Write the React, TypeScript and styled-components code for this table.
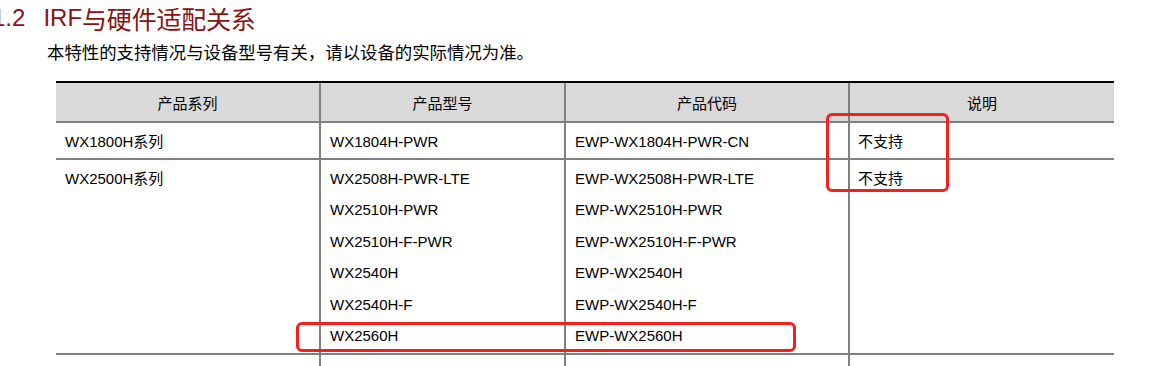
import React from "react";
import styled, { createGlobalStyle } from "styled-components";

const GlobalStyle = createGlobalStyle`
  html, body {
    margin: 0;
    padding: 0;
    background: #ffffff;
  }
  body {
    width: 1155px;
    height: 366px;
    overflow: hidden;
    font-family: "Liberation Sans", "Noto Sans CJK SC", sans-serif;
    color: #000;
  }
`;

const Page = styled.div`
  position: relative;
  width: 1155px;
  height: 366px;
  overflow: hidden;
`;

const Heading = styled.h2`
  margin: 0 0 0 -8px;
  height: 36px;
  display: flex;
  align-items: center;
  font-family: "Liberation Sans", "Noto Sans CJK SC", sans-serif;
  font-weight: normal;
  font-size: 24px;
  color: #8a1212;
  white-space: nowrap;
`;

const HeadingNumber = styled.span`
  margin-right: 18px;
`;

const HeadingCjk = styled.span`
  font-size: 25px;
  letter-spacing: -0.2px;
`;

const Intro = styled.p`
  margin: 4px 0 0 47px;
  height: 26px;
  line-height: 26px;
  font-size: 17.4px;
  font-family: "Liberation Sans", "Noto Sans CJK SC", sans-serif;
  white-space: nowrap;
`;

const Grid = styled.div`
  margin: 15px 0 0 56px;
  width: 1058px;
  display: grid;
  grid-template-columns: 263px 245px 284px 266px;
  border-top: 2px solid #000;
`;

const HeadCell = styled.div<{ $first?: boolean }>`
  box-sizing: border-box;
  height: 40px;
  background: #d9d9d9;
  border-bottom: 2px solid #808080;
  border-left: ${(p) => (p.$first ? "none" : "2px solid #808080")};
  display: flex;
  align-items: center;
  justify-content: center;
  font-size: 15px;
`;

const Cell = styled.div<{ $first?: boolean; $pad?: number }>`
  box-sizing: border-box;
  border-bottom: 2px solid #808080;
  border-left: ${(p) => (p.$first ? "none" : "2px solid #808080")};
  padding: 2.6px 9px 1.4px ${(p) => p.$pad ?? 9}px;
  font-size: 15px;
  white-space: nowrap;
`;

const FillerCell = styled.div<{ $first?: boolean }>`
  height: 30px;
  border-left: ${(p) => (p.$first ? "none" : "2px solid #808080")};
`;

const Line = styled.div`
  line-height: 31.4px;
  height: 31.4px;
`;

const Mark = styled.div`
  position: absolute;
  box-sizing: border-box;
  border: 3px solid #f42020;
  border-radius: 6px;
  pointer-events: none;
`;

const headers = ["产品系列", "产品型号", "产品代码", "说明"];

type Row = { series: string; models: string[]; codes: string[]; note: string };

const rows: Row[] = [
  {
    series: "WX1800H系列",
    models: ["WX1804H-PWR"],
    codes: ["EWP-WX1804H-PWR-CN"],
    note: "不支持",
  },
  {
    series: "WX2500H系列",
    models: [
      "WX2508H-PWR-LTE",
      "WX2510H-PWR",
      "WX2510H-F-PWR",
      "WX2540H",
      "WX2540H-F",
      "WX2560H",
    ],
    codes: [
      "EWP-WX2508H-PWR-LTE",
      "EWP-WX2510H-PWR",
      "EWP-WX2510H-F-PWR",
      "EWP-WX2540H",
      "EWP-WX2540H-F",
      "EWP-WX2560H",
    ],
    note: "不支持",
  },
];

export default function App() {
  return (
    <Page>
      <GlobalStyle />
      <Heading>
        <HeadingNumber>1.2</HeadingNumber>
        IRF<HeadingCjk>与硬件适配关系</HeadingCjk>
      </Heading>
      <Intro>本特性的支持情况与设备型号有关，请以设备的实际情况为准。</Intro>
      <Grid>
        {headers.map((h, i) => (
          <HeadCell key={h} $first={i === 0}>
            {h}
          </HeadCell>
        ))}
        {rows.map((r) => (
          <React.Fragment key={r.series}>
            <Cell $first>
              <Line>{r.series}</Line>
            </Cell>
            <Cell>
              {r.models.map((m) => (
                <Line key={m}>{m}</Line>
              ))}
            </Cell>
            <Cell>
              {r.codes.map((c) => (
                <Line key={c}>{c}</Line>
              ))}
            </Cell>
            <Cell $pad={8}>
              <Line>{r.note}</Line>
            </Cell>
          </React.Fragment>
        ))}
        {headers.map((h, i) => (
          <FillerCell key={"f" + h} $first={i === 0} />
        ))}
      </Grid>
      <Mark style={{ left: 826, top: 113, width: 123, height: 79 }} />
      <Mark style={{ left: 296, top: 322, width: 500, height: 30 }} />
    </Page>
  );
}
